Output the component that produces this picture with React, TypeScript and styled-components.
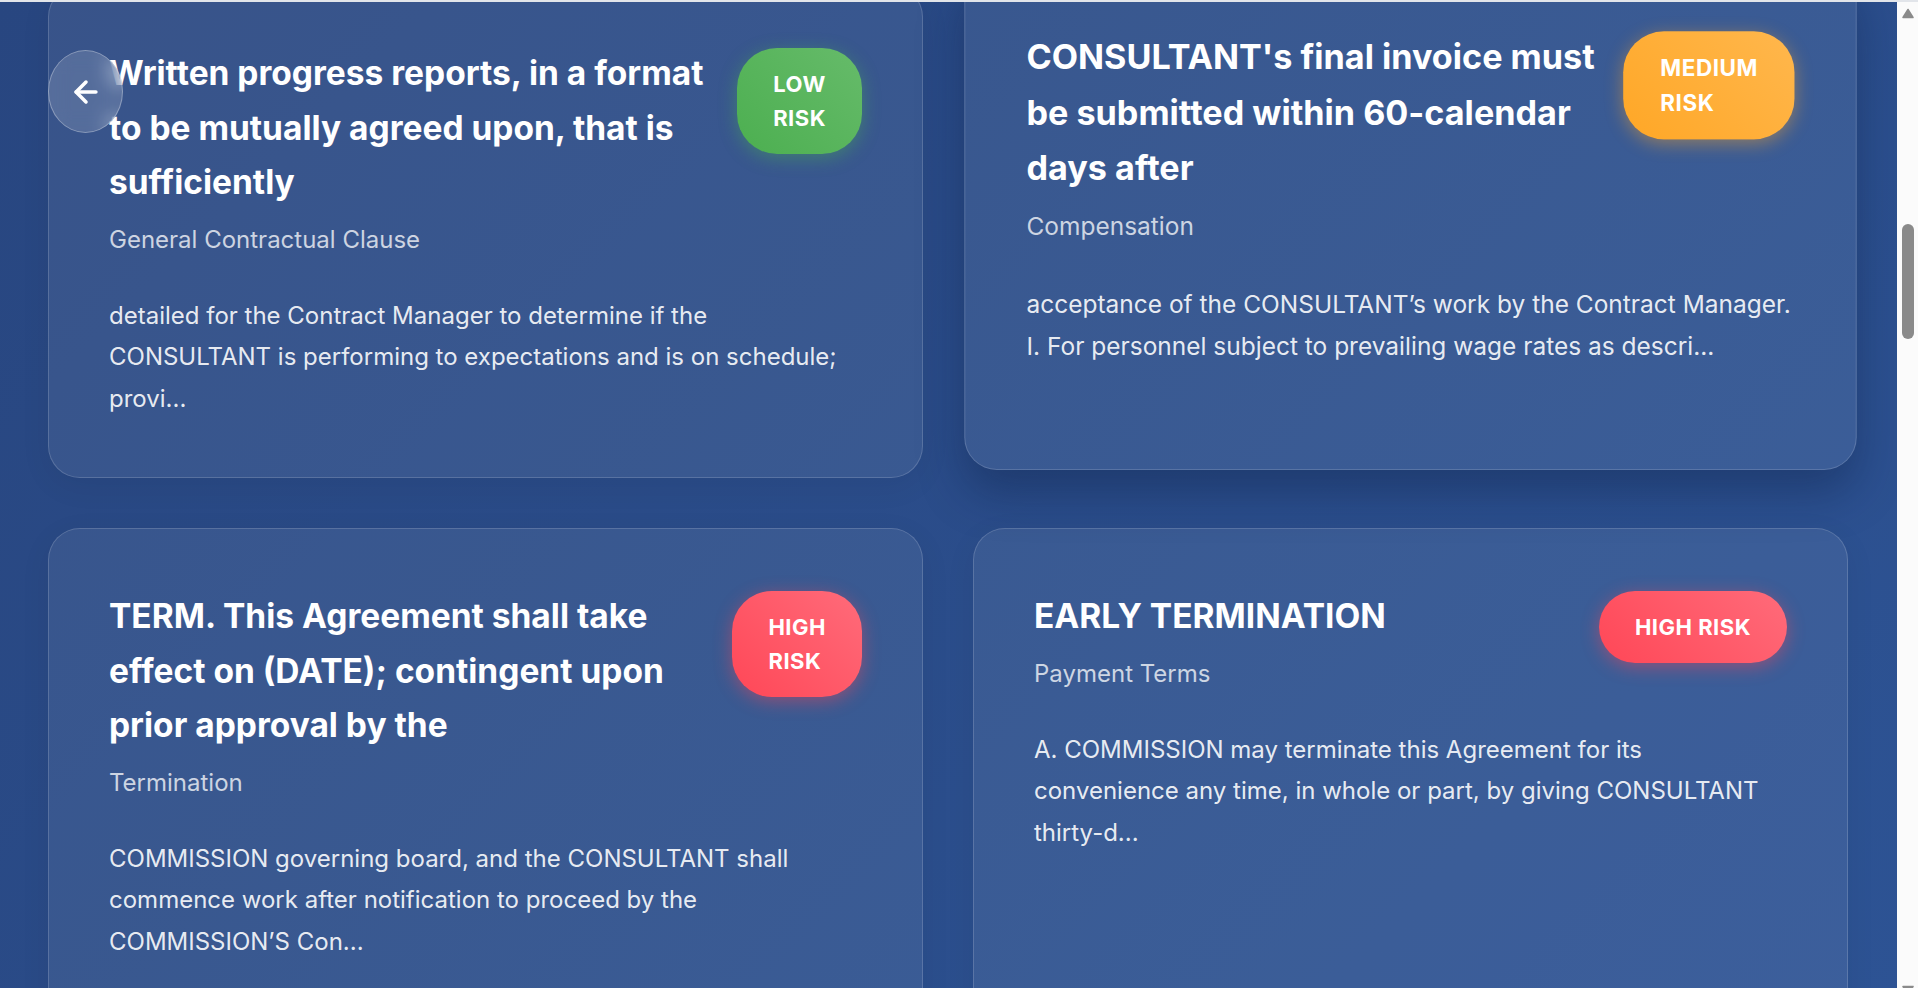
import React, { useLayoutEffect, useRef } from "react";
import styled, { createGlobalStyle, css } from "styled-components";
import { ArrowLeft } from "lucide-react";

type Risk = "low" | "medium" | "high";

interface Clause {
  title: string;
  category: string;
  text: string;
  risk: Risk;
  stacked?: boolean;
}

const GlobalStyle = createGlobalStyle`
  html, body { margin: 0; padding: 0; }
  * { box-sizing: border-box; }
  body {
    font-family: Inter, "Noto Sans", "Liberation Sans", sans-serif;
    background: linear-gradient(135deg, #284680 0%, #2d5394 100%) fixed;
    color: #ffffff;
    line-height: 1.8;
  }
`;

const TopEdge = styled.div`
  position: fixed;
  top: 0;
  left: 0;
  right: 0;
  height: 2px;
  background: #e2e5ea;
  z-index: 30;
`;

const ScrollTrack = styled.div`
  position: fixed;
  top: 0;
  right: 0;
  width: 21px;
  height: 100vh;
  background: #fbfbfb;
  z-index: 20;
`;

const ScrollThumb = styled.div`
  position: absolute;
  top: 224px;
  left: 5px;
  width: 12px;
  height: 115px;
  border-radius: 6px;
  background: #8a8a8a;
`;

const ScrollArrow = styled.svg<{ $down?: boolean }>`
  position: absolute;
  left: 5px;
  width: 12px;
  height: 11px;
  ${(p) => (p.$down ? "bottom: -8px;" : "top: 8px;")}
`;

const BackButton = styled.button`
  position: fixed;
  top: 50px;
  left: 48px;
  width: 75px;
  height: 83px;
  border-radius: 50%;
  border: 1px solid rgba(255, 255, 255, 0.3);
  background: rgba(255, 255, 255, 0.15);
  backdrop-filter: blur(10px);
  color: #ffffff;
  display: flex;
  align-items: center;
  justify-content: center;
  padding: 0;
  cursor: pointer;
  z-index: 10;
`;

const Page = styled.main`
  margin-right: 21px;
  padding: 152px 49px 120px 48px;
`;

const Grid = styled.section`
  display: grid;
  grid-template-columns: 1fr 1fr;
  gap: 50px;
`;

const Card = styled.article<{ $lifted?: boolean }>`
  padding: 60px 60px 58px;
  border-radius: 32px;
  background: rgba(255, 255, 255, 0.075);
  border: 1px solid rgba(255, 255, 255, 0.16);
  box-shadow: 0 8px 32px rgba(0, 0, 0, 0.06);
  min-width: 0;
  ${(p) =>
    p.$lifted &&
    css`
      transform: translateY(-13px) scale(1.02);
      box-shadow: 0 22px 44px rgba(10, 25, 60, 0.35);
    `}
`;

const CardHeader = styled.header`
  display: flex;
  justify-content: space-between;
  align-items: flex-start;
  gap: 20px;
`;

const TitleBlock = styled.div`
  flex: 1 1 auto;
  min-width: 0;
`;

const Title = styled.h3`
  margin: 0;
  font-size: 33.5px;
  font-weight: 700;
  line-height: 54.5px;
  white-space: pre;
  color: #ffffff;
`;

const Category = styled.p`
  margin: 10px 0 0;
  font-size: 24px;
  line-height: 40px;
  color: rgba(255, 255, 255, 0.75);
`;

const Excerpt = styled.p`
  margin: 35px 0 0;
  font-size: 24px;
  line-height: 41.5px;
  white-space: pre;
  color: rgba(255, 255, 255, 0.9);
`;

const badgeColors: Record<Risk, { bg: string; glow: string }> = {
  low: {
    bg: "linear-gradient(45deg, #4caf50 0%, #66bb6a 100%)",
    glow: "rgba(76, 175, 80, 0.45)",
  },
  medium: {
    bg: "linear-gradient(45deg, #ffa726 0%, #ffb74d 100%)",
    glow: "rgba(255, 167, 38, 0.45)",
  },
  high: {
    bg: "linear-gradient(45deg, #ff4757 0%, #ff6b7a 100%)",
    glow: "rgba(255, 71, 87, 0.45)",
  },
};

const Badge = styled.span<{ $risk: Risk; $stacked?: boolean }>`
  flex: none;
  margin-top: 2px;
  padding: 19px 36px;
  width: ${(p) => (p.$stacked ? "min-content" : "auto")};
  border-radius: 40px;
  font-size: 22px;
  font-weight: 700;
  line-height: 34px;
  letter-spacing: 0.5px;
  text-transform: uppercase;
  color: #ffffff;
  background: ${(p) => badgeColors[p.$risk].bg};
  box-shadow: 0 4px 18px ${(p) => badgeColors[p.$risk].glow};
`;

const riskLabel: Record<Risk, string> = {
  low: "Low Risk",
  medium: "Medium Risk",
  high: "High Risk",
};

const before: Clause[] = [
  {
    title: "SCOPE OF WORK. The CONSULTANT\nshall perform the services\ndescribed in",
    category: "Scope of Services",
    text: "Attachment A, and shall provide all labor, materials,\nequipment and supplies necessary to complete the\nservices in a...",
    risk: "low",
    stacked: true,
  },
  {
    title: "The CONSULTANT shall maintain\ninsurance coverage during the\nentire term",
    category: "Insurance",
    text: "of this Agreement, including general liability,\nautomobile liability and professional liability\ncoverage as req...",
    risk: "medium",
    stacked: true,
  },
  {
    title: "INDEMNIFICATION. CONSULTANT\nshall defend, indemnify and\nhold harmless",
    category: "Indemnification",
    text: "the COMMISSION, its officers, employees and agents\nfrom any and all claims, demands, losses or\nliabilities ari...",
    risk: "high",
    stacked: true,
  },
  {
    title: "All documents prepared by the\nCONSULTANT under this\nAgreement shall",
    category: "Ownership of Documents",
    text: "become the property of the COMMISSION upon\npayment, and may be used by the COMMISSION\nwithout furt...",
    risk: "medium",
    stacked: true,
  },
  {
    title: "CONFIDENTIALITY. CONSULTANT\nshall not disclose any\ninformation obtained",
    category: "Confidentiality",
    text: "in the performance of this Agreement to any third\nparty without the prior written consent of the\nContract Man...",
    risk: "low",
    stacked: true,
  },
  {
    title: "The CONSULTANT shall comply\nwith all applicable federal, state\nand local",
    category: "Compliance with Laws",
    text: "laws, ordinances, regulations and codes in the\nperformance of the services, and shall obtain all\nnecessary pe...",
    risk: "low",
    stacked: true,
  },
];

const visible: Clause[] = [
  {
    title:
      "Written progress reports, in a format\nto be mutually agreed upon, that is\nsufficiently",
    category: "General Contractual Clause",
    text: "detailed for the Contract Manager to determine if the\nCONSULTANT is performing to expectations and is on schedule;\nprovi...",
    risk: "low",
    stacked: true,
  },
  {
    title:
      "CONSULTANT's final invoice must\nbe submitted within 60-calendar\ndays after",
    category: "Compensation",
    text: "acceptance of the CONSULTANT\u2019s work by the Contract Manager.\nI. For personnel subject to prevailing wage rates as descri...",
    risk: "medium",
    stacked: true,
  },
  {
    title:
      "TERM. This Agreement shall take\neffect on (DATE); contingent upon\nprior approval by the",
    category: "Termination",
    text: "COMMISSION governing board, and the CONSULTANT shall\ncommence work after notification to proceed by the\nCOMMISSION\u2019S Con...",
    risk: "high",
    stacked: true,
  },
  {
    title: "EARLY TERMINATION",
    category: "Payment Terms",
    text: "A. COMMISSION may terminate this Agreement for its\nconvenience any time, in whole or part, by giving CONSULTANT\nthirty-d...",
    risk: "high",
  },
];

const after: Clause[] = [
  {
    title: "DISPUTES. Any dispute concerning\na question of fact arising\nunder",
    category: "Dispute Resolution",
    text: "this Agreement which is not disposed of by agreement\nshall be decided by the Executive Director, whose\ndecision sh...",
    risk: "medium",
    stacked: true,
  },
  {
    title: "AUDIT REVIEW PROCEDURES",
    category: "Audit",
    text: "Any dispute concerning a question of fact arising under\nan interim or post audit of this Agreement that is not\ndispo...",
    risk: "low",
  },
];

interface CardProps {
  clause: Clause;
  lifted?: boolean;
}

const ClauseCard = React.forwardRef<HTMLElement, CardProps>(
  ({ clause, lifted }, ref) => (
    <Card ref={ref} $lifted={lifted}>
      <CardHeader>
        <TitleBlock>
          <Title>{clause.title}</Title>
          <Category>{clause.category}</Category>
        </TitleBlock>
        <Badge $risk={clause.risk} $stacked={clause.stacked}>
          {riskLabel[clause.risk]}
        </Badge>
      </CardHeader>
      <Excerpt>{clause.text}</Excerpt>
    </Card>
  )
);

export default function App() {
  const anchorRef = useRef<HTMLElement>(null);

  useLayoutEffect(() => {
    const el = anchorRef.current;
    if (!el) return;
    const top = el.getBoundingClientRect().top + window.scrollY;
    window.scrollTo(0, top + 15);
  }, []);

  return (
    <>
      <GlobalStyle />
      <TopEdge />
      <ScrollTrack aria-hidden="true">
        <ScrollArrow viewBox="0 0 12 11">
          <path d="M6 1.5 L11 9.5 L1 9.5 Z" fill="#8a8a8a" stroke="#8a8a8a" strokeWidth="1.5" strokeLinejoin="round" />
        </ScrollArrow>
        <ScrollThumb />
        <ScrollArrow viewBox="0 0 12 11" $down>
          <path d="M6 9.5 L11 1.5 L1 1.5 Z" fill="#8a8a8a" stroke="#8a8a8a" strokeWidth="1.5" strokeLinejoin="round" />
        </ScrollArrow>
      </ScrollTrack>
      <BackButton aria-label="Back">
        <ArrowLeft size={34} strokeWidth={2.5} />
      </BackButton>
      <Page>
        <Grid>
          {before.map((c, i) => (
            <ClauseCard key={`b${i}`} clause={c} />
          ))}
          {visible.map((c, i) => (
            <ClauseCard
              key={`v${i}`}
              clause={c}
              lifted={i === 1}
              ref={i === 0 ? anchorRef : undefined}
            />
          ))}
          {after.map((c, i) => (
            <ClauseCard key={`a${i}`} clause={c} />
          ))}
        </Grid>
      </Page>
    </>
  );
}
